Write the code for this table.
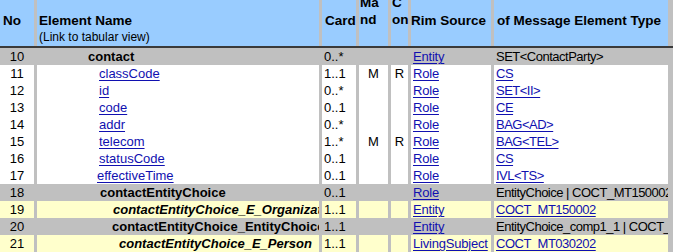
import React from 'react';

const rows = [
  { no: 10, name: 'contact', pad: 'pl-[51px]', kind: 'group', card: '0..*', rim: 'Entity', type: 'SET<ContactParty>', typeLink: false },
  { no: 11, name: 'classCode', pad: 'pl-[62px]', kind: 'attr', card: '1..1', mand: 'M', con: 'R', rim: 'Role', type: 'CS', typeLink: true },
  { no: 12, name: 'id', pad: 'pl-[62px]', kind: 'attr', card: '0..*', rim: 'Role', type: 'SET<II>', typeLink: true },
  { no: 13, name: 'code', pad: 'pl-[62px]', kind: 'attr', card: '0..1', rim: 'Role', type: 'CE', typeLink: true },
  { no: 14, name: 'addr', pad: 'pl-[62px]', kind: 'attr', card: '0..*', rim: 'Role', type: 'BAG<AD>', typeLink: true },
  { no: 15, name: 'telecom', pad: 'pl-[62px]', kind: 'attr', card: '1..*', mand: 'M', con: 'R', rim: 'Role', type: 'BAG<TEL>', typeLink: true },
  { no: 16, name: 'statusCode', pad: 'pl-[62px]', kind: 'attr', card: '0..1', rim: 'Role', type: 'CS', typeLink: true },
  { no: 17, name: 'effectiveTime', pad: 'pl-[60px]', kind: 'attr', card: '0..1', rim: 'Role', type: 'IVL<TS>', typeLink: true },
  { no: 18, name: 'contactEntityChoice', pad: 'pl-[63px]', kind: 'group', card: '0..1', rim: 'Role', type: 'EntityChoice | COCT_MT150002', typeLink: false },
  { no: 19, name: 'contactEntityChoice_E_Organization', pad: 'pl-[76px]', kind: 'choice', card: '1..1', rim: 'Entity', type: 'COCT_MT150002', typeLink: true },
  { no: 20, name: 'contactEntityChoice_EntityChoice', pad: 'pl-[75px]', kind: 'group', card: '1..1', rim: 'Entity', type: 'EntityChoice_comp1_1 | COCT_MT150002', typeLink: false },
  { no: 21, name: 'contactEntityChoice_E_Person', pad: 'pl-[82px]', kind: 'choice', card: '1..1', rim: 'LivingSubject', type: 'COCT_MT030202', typeLink: true },
];

const cols = 'grid grid-cols-[34px_282px_34px_29px_17px_80px_174px] gap-x-[3px]';

function cellBg(kind) {
  if (kind === 'group') return '';
  if (kind === 'choice') return 'bg-[#ffffcc]';
  return 'bg-white';
}

function Link({ children }) {
  return <a href="#" className="text-[#1010b0] underline underline-offset-[2px]">{children}</a>;
}

function Row({ r }) {
  const bg = cellBg(r.kind);
  const cell = `${bg} h-[17px] leading-[17px] overflow-hidden whitespace-nowrap`;
  let nameClass = '';
  if (r.kind === 'group') nameClass = 'font-bold';
  if (r.kind === 'choice') nameClass = 'font-bold italic';

  return (
    <div className={`${cols} bg-[#c0c0c0]`}>
      <div className={`${cell} text-center`}>{r.no}</div>
      <div className={`${cell} ${r.pad}`}>
        {r.kind === 'attr' ? <Link>{r.name}</Link> : <span className={nameClass}>{r.name}</span>}
      </div>
      <div className={`${cell} pl-[2px]`}>{r.card}</div>
      <div className={`${cell} text-center`}>{r.mand}</div>
      <div className={`${cell} text-center`}>{r.con}</div>
      <div className={`${cell} pl-[2px] tracking-[-0.2px]`}>
        <Link>{r.rim}</Link>
      </div>
      <div className={`${cell} pl-[2px] tracking-[-0.5px]`}>
        {r.typeLink ? <Link>{r.type}</Link> : r.type}
      </div>
    </div>
  );
}

export default function App() {
  return (
    <div className="w-[673px] h-[252px] overflow-hidden bg-[#c0c0c0] font-['Liberation_Sans',Arial,sans-serif] text-[13px] text-black">
      <div className={`${cols} h-[46px] overflow-hidden font-bold text-[13.5px] leading-[17px]`}>
        <div className="bg-[#99ccff] pt-[12px] pl-[3px]">No</div>
        <div className="bg-[#99ccff] pt-[12px] pl-[2px]">
          <div>Element Name</div>
          <div className="font-normal text-[12px]">(Link to tabular view)</div>
        </div>
        <div className="bg-[#99ccff] pt-[12px] pl-[3px]">Card</div>
        <div className="bg-[#99ccff] pl-[1px]">
          <div className="-mt-[6px]">Ma</div>
          <div>nd</div>
        </div>
        <div className="bg-[#99ccff] pl-[1px]">
          <div className="-mt-[6px]">C</div>
          <div>on</div>
        </div>
        <div className="bg-[#99ccff] pt-[12px] whitespace-nowrap">Rim Source</div>
        <div className="bg-[#99ccff] pt-[12px] pl-[3px] whitespace-nowrap">of Message Element Type</div>
      </div>
      <div className="h-[2px] bg-[#3a3a3a]" />
      {rows.map((r) => (
        <Row key={r.no} r={r} />
      ))}
    </div>
  );
}
